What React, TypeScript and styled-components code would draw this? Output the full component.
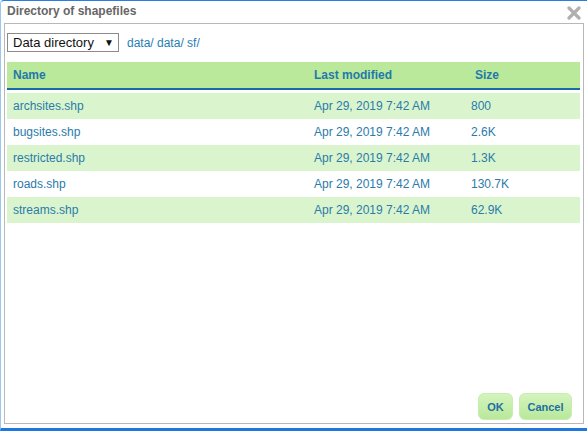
import React from "react";
import styled, { createGlobalStyle } from "styled-components";

const Global = createGlobalStyle`
  html, body { margin: 0; padding: 0; background: #fff; }
  body { font-family: "Liberation Sans", Arial, sans-serif; }
  * { box-sizing: border-box; }
`;

const Window = styled.div`
  width: 587px;
  height: 431px;
  border-top: 1px solid #2a7de1;
  border-left: 1px solid #9cc6f2;
  border-bottom: 3px solid #1f78e0;
  border-top-left-radius: 4px;
  display: flex;
  flex-direction: column;
  background: #fff;
`;

const TitleBar = styled.div`
  height: 22px;
  display: flex;
  align-items: center;
  justify-content: space-between;
  padding: 0 6px 2px 6px;
`;

const Title = styled.div`
  font-size: 12px;
  font-weight: bold;
  color: #666;
`;

const Close = styled.svg`
  width: 14px;
  height: 14px;
  margin-top: 3px;
`;

const Panel = styled.div`
  flex: 1;
  margin: 0 3px 4px 3px;
  border: 1px solid #b8b8b8;
  display: flex;
  flex-direction: column;
  padding: 9px 2px 3px 2px;
`;

const Toolbar = styled.div`
  display: flex;
  align-items: center;
  gap: 8px;
  height: 19px;
`;

const Select = styled.div`
  width: 112px;
  height: 19px;
  border: 1px solid #8a8a8a;
  display: flex;
  align-items: center;
  justify-content: space-between;
  padding: 0 4px 0 5px;
  font-size: 13px;
  color: #111;
`;

const Arrow = styled.span`
  font-size: 10px;
  color: #111;
`;

const Path = styled.span`
  font-size: 12px;
  color: #1f7eb3;
`;

const Table = styled.div`
  margin-top: 10px;
  display: flex;
  flex-direction: column;
  width: 573px;
`;

const cols = "301px 157px 1fr";

const HeaderRow = styled.div`
  height: 28px;
  background: #bbe99c;
  border-bottom: 2px solid #1a6aa8;
  display: grid;
  grid-template-columns: ${cols};
  align-items: center;
  padding-left: 6px;
  padding-bottom: 1px;
  margin-bottom: 3px;
`;

const HeadCell = styled.div<{ $indent?: number }>`
  font-size: 12px;
  font-weight: bold;
  color: #1f7aaa;
  padding-left: ${(p) => p.$indent ?? 0}px;
`;

const Row = styled.div<{ $alt: boolean }>`
  height: 26px;
  background: ${(p) => (p.$alt ? "#daf5cd" : "#fff")};
  display: grid;
  grid-template-columns: ${cols};
  align-items: center;
  padding-left: 6px;
`;

const Cell = styled.div`
  font-size: 12px;
  color: #2a7bab;
`;

const Footer = styled.div`
  margin-top: auto;
  display: flex;
  justify-content: flex-end;
  gap: 6px;
  padding-right: 9px;
`;

const Button = styled.button<{ $w: number }>`
  width: ${(p) => p.$w}px;
  height: 27px;
  border: 1px solid #c9ecb3;
  border-radius: 6px;
  background: linear-gradient(#d4f4bd, #b8e89a);
  font-family: "Liberation Sans", Arial, sans-serif;
  font-size: 11px;
  font-weight: bold;
  color: #1e6fa3;
  padding: 0;
`;

const files = [
  { name: "archsites.shp", size: "800" },
  { name: "bugsites.shp", size: "2.6K" },
  { name: "restricted.shp", size: "1.3K" },
  { name: "roads.shp", size: "130.7K" },
  { name: "streams.shp", size: "62.9K" },
];

export default function App() {
  return (
    <>
      <Global />
      <Window>
        <TitleBar>
          <Title>Directory of shapefiles</Title>
          <Close viewBox="0 0 14 14">
            <path d="M2 2 L12 12 M12 2 L2 12" stroke="#b0b0b0" strokeWidth="3.2" strokeLinecap="round" />
          </Close>
        </TitleBar>
        <Panel>
          <Toolbar>
            <Select>
              <span>Data directory</span>
              <Arrow>▼</Arrow>
            </Select>
            <Path>data/ data/ sf/</Path>
          </Toolbar>
          <Table>
            <HeaderRow>
              <HeadCell>Name</HeadCell>
              <HeadCell>Last modified</HeadCell>
              <HeadCell $indent={4}>Size</HeadCell>
            </HeaderRow>
            {files.map((f, i) => (
              <Row key={f.name} $alt={i % 2 === 0}>
                <Cell>{f.name}</Cell>
                <Cell>Apr 29, 2019 7:42 AM</Cell>
                <Cell>{f.size}</Cell>
              </Row>
            ))}
          </Table>
          <Footer>
            <Button $w={35}>OK</Button>
            <Button $w={53}>Cancel</Button>
          </Footer>
        </Panel>
      </Window>
    </>
  );
}
